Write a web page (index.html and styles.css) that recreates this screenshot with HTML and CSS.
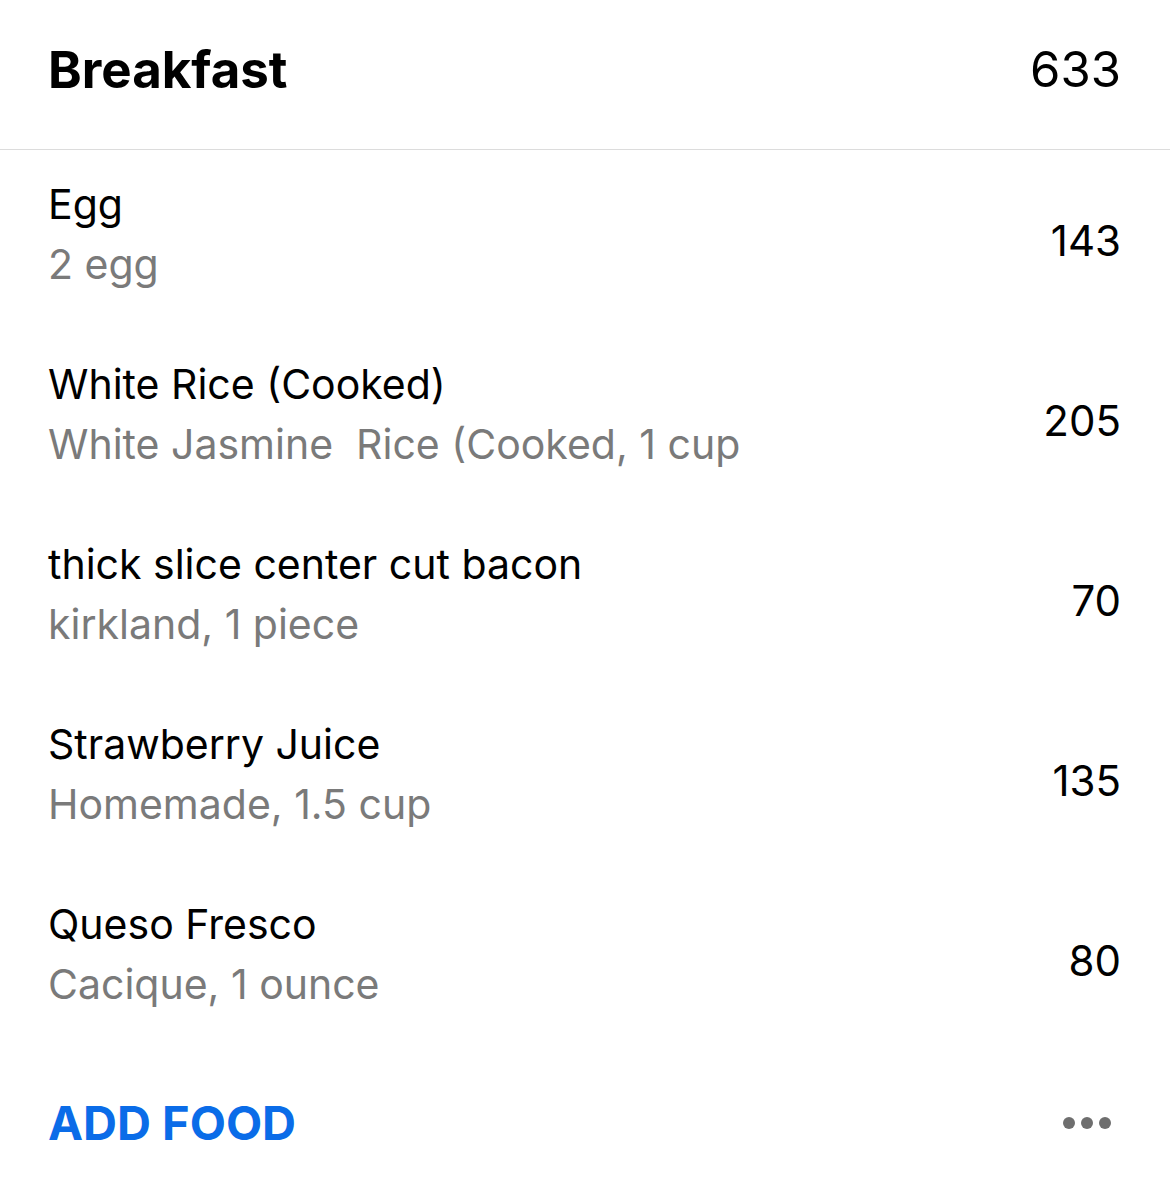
FILE: index.html
```html
<!DOCTYPE html>
<html lang="en">
<head>
    <meta charset="UTF-8">
    <meta name="viewport" content="width=device-width, initial-scale=1.0">
    <title>Breakfast</title>
    <link rel="stylesheet" href="styles.css">
</head>
<body>
    <div class="meal">
        <div class="meal-header">
            <h2>Breakfast</h2>
            <span class="meal-total">633</span>
        </div>

        <div class="food-list">
            <div class="food">
                <div class="food-info">
                    <div class="food-name">Egg</div>
                    <div class="food-detail">2 egg</div>
                </div>
                <div class="food-cal">143</div>
            </div>
            <div class="food">
                <div class="food-info">
                    <div class="food-name">White Rice (Cooked)</div>
                    <div class="food-detail">White Jasmine&nbsp; Rice (Cooked, 1 cup</div>
                </div>
                <div class="food-cal">205</div>
            </div>
            <div class="food">
                <div class="food-info">
                    <div class="food-name">thick slice center cut bacon</div>
                    <div class="food-detail">kirkland, 1 piece</div>
                </div>
                <div class="food-cal">70</div>
            </div>
            <div class="food">
                <div class="food-info">
                    <div class="food-name">Strawberry Juice</div>
                    <div class="food-detail">Homemade, 1.5 cup</div>
                </div>
                <div class="food-cal">135</div>
            </div>
            <div class="food">
                <div class="food-info">
                    <div class="food-name">Queso Fresco</div>
                    <div class="food-detail">Cacique, 1 ounce</div>
                </div>
                <div class="food-cal">80</div>
            </div>
        </div>

        <div class="meal-footer">
            <button class="add-food">ADD FOOD</button>
            <div class="more">
                <span class="dot"></span>
                <span class="dot"></span>
                <span class="dot"></span>
            </div>
        </div>
    </div>
</body>
</html>
```

FILE: styles.css
```css
body {
    font-family: Inter, "Noto Sans", sans-serif;
    background-color: #fff;
    color: #000;
    margin: 0;
}
.meal {
    width: 1170px;
}
.meal-header {
    display: flex;
    justify-content: space-between;
    align-items: center;
    height: 139px;
    padding: 0 49px 10px 48px;
    border-bottom: 1px solid #dcdcdc;
}
.meal-header h2 {
    margin: 0;
    font-size: 51px;
    font-weight: 700;
}
.meal-total {
    font-size: 49px;
}
.food-list {
    padding: 0 49px 0 48px;
}
.food {
    display: flex;
    justify-content: space-between;
    align-items: center;
    padding: 24px 0 36px;
}
.food-name, .food-detail {
    font-size: 41px;
    line-height: 60px;
}
.food-detail {
    color: #7a7a7a;
}
.food-cal {
    font-size: 42px;
    padding-top: 12px;
}
.meal-footer {
    display: flex;
    justify-content: space-between;
    align-items: center;
    padding: 44px 49px 0 48px;
}
.add-food {
    background: none;
    border: none;
    padding: 0;
    font-family: inherit;
    font-size: 47px;
    font-weight: 700;
    color: #0a6ce8;
    cursor: pointer;
}
.more {
    display: flex;
    gap: 6px;
    margin-right: 10px;
}
.dot {
    width: 12px;
    height: 12px;
    border-radius: 50%;
    background: #6e6e6e;
}
```
